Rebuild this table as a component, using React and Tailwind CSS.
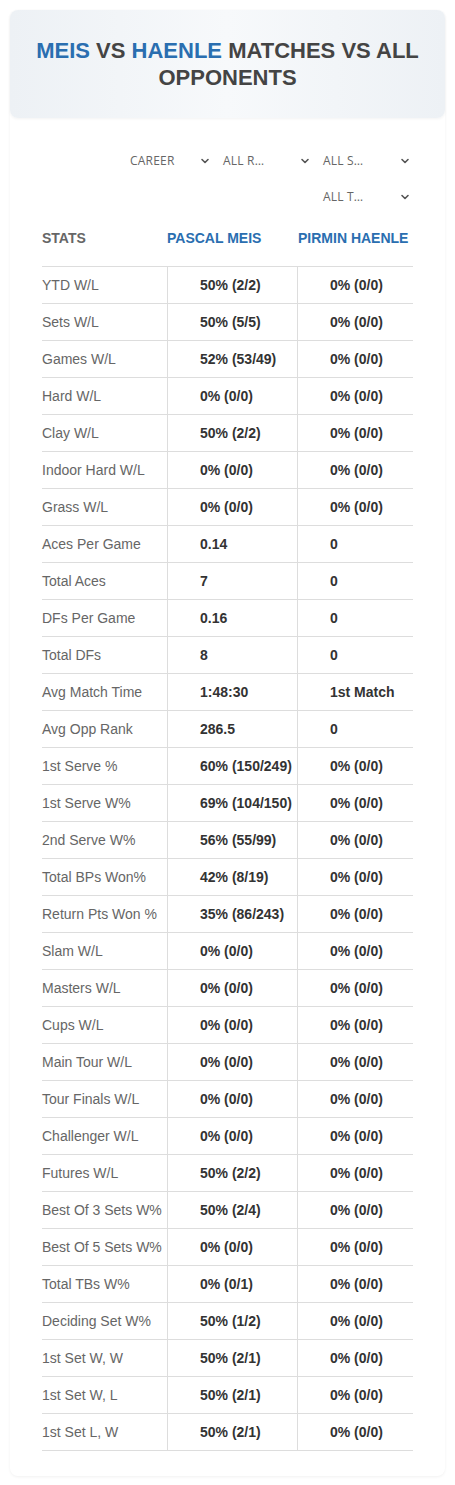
import React from "react";
import { ChevronDown } from "lucide-react";

const rows = [
  ["YTD W/L", "50% (2/2)", "0% (0/0)"],
  ["Sets W/L", "50% (5/5)", "0% (0/0)"],
  ["Games W/L", "52% (53/49)", "0% (0/0)"],
  ["Hard W/L", "0% (0/0)", "0% (0/0)"],
  ["Clay W/L", "50% (2/2)", "0% (0/0)"],
  ["Indoor Hard W/L", "0% (0/0)", "0% (0/0)"],
  ["Grass W/L", "0% (0/0)", "0% (0/0)"],
  ["Aces Per Game", "0.14", "0"],
  ["Total Aces", "7", "0"],
  ["DFs Per Game", "0.16", "0"],
  ["Total DFs", "8", "0"],
  ["Avg Match Time", "1:48:30", "1st Match"],
  ["Avg Opp Rank", "286.5", "0"],
  ["1st Serve %", "60% (150/249)", "0% (0/0)"],
  ["1st Serve W%", "69% (104/150)", "0% (0/0)"],
  ["2nd Serve W%", "56% (55/99)", "0% (0/0)"],
  ["Total BPs Won%", "42% (8/19)", "0% (0/0)"],
  ["Return Pts Won %", "35% (86/243)", "0% (0/0)"],
  ["Slam W/L", "0% (0/0)", "0% (0/0)"],
  ["Masters W/L", "0% (0/0)", "0% (0/0)"],
  ["Cups W/L", "0% (0/0)", "0% (0/0)"],
  ["Main Tour W/L", "0% (0/0)", "0% (0/0)"],
  ["Tour Finals W/L", "0% (0/0)", "0% (0/0)"],
  ["Challenger W/L", "0% (0/0)", "0% (0/0)"],
  ["Futures W/L", "50% (2/2)", "0% (0/0)"],
  ["Best Of 3 Sets W%", "50% (2/4)", "0% (0/0)"],
  ["Best Of 5 Sets W%", "0% (0/0)", "0% (0/0)"],
  ["Total TBs W%", "0% (0/1)", "0% (0/0)"],
  ["Deciding Set W%", "50% (1/2)", "0% (0/0)"],
  ["1st Set W, W", "50% (2/1)", "0% (0/0)"],
  ["1st Set W, L", "50% (2/1)", "0% (0/0)"],
  ["1st Set L, W", "50% (2/1)", "0% (0/0)"],
];

const Filter = ({ label, w }) => (
  <div className={`${w} h-[36px] flex items-center justify-between pl-[10px] pr-[2px]`}>
    <span className="text-[12px] text-[#666] font-['Open_Sans',sans-serif] tracking-[0.2px]">{label}</span>
    <ChevronDown className="w-[12px] h-[12px] text-[#555]" strokeWidth={3.2} />
  </div>
);

export default function App() {
  return (
    <div className="bg-white p-[10px] font-['Liberation_Sans',Arial,sans-serif]">
      <div className="rounded-lg shadow-[0_1px_3px_rgba(0,0,0,0.06)] pb-[25px]">
        {/* Header */}
        <div className="h-[108px] rounded-lg bg-gradient-to-r from-[#edf1f5] via-[#f7f9fb] to-[#edf1f5] shadow-[0_1px_3px_rgba(0,0,0,0.05)] flex items-center justify-center px-5">
          <h1 className="text-center text-[22px] leading-[27px] font-bold text-[#444] uppercase">
            <span className="text-[#2a6eb0]">Meis</span> vs <span className="text-[#2a6eb0]">Haenle</span> Matches vs All Opponents
          </h1>
        </div>

        <div className="px-[32px]">
          {/* Filters */}
          <div className="pt-[25px] flex flex-wrap justify-end">
            <Filter label="CAREER" w="w-[93px]" />
            <Filter label="ALL R…" w="w-[100px]" />
            <Filter label="ALL S…" w="w-[100px]" />
            <Filter label="ALL T…" w="w-[100px]" />
          </div>

          {/* Table */}
          <div className="grid grid-cols-[125px_130px_116px] h-[52px] items-center border-b border-[#dddddd] text-[14px] font-bold pb-[4px]">
            <span className="text-[#666]">STATS</span>
            <span className="text-[#2a6eb0]">PASCAL MEIS</span>
            <span className="text-[#2a6eb0] pl-px">PIRMIN HAENLE</span>
          </div>
          {rows.map(([label, a, b]) => (
            <div key={label} className="grid grid-cols-[125px_130px_116px] h-[37px] border-b border-[#dddddd] text-[14px]">
              <div className="flex items-center text-[#666]">{label}</div>
              <div className="flex items-center pl-[32px] border-l border-[#dddddd] font-bold text-[#333]">{a}</div>
              <div className="flex items-center pl-[32px] border-l border-[#dddddd] font-bold text-[#333]">{b}</div>
            </div>
          ))}
        </div>
      </div>
    </div>
  );
}
